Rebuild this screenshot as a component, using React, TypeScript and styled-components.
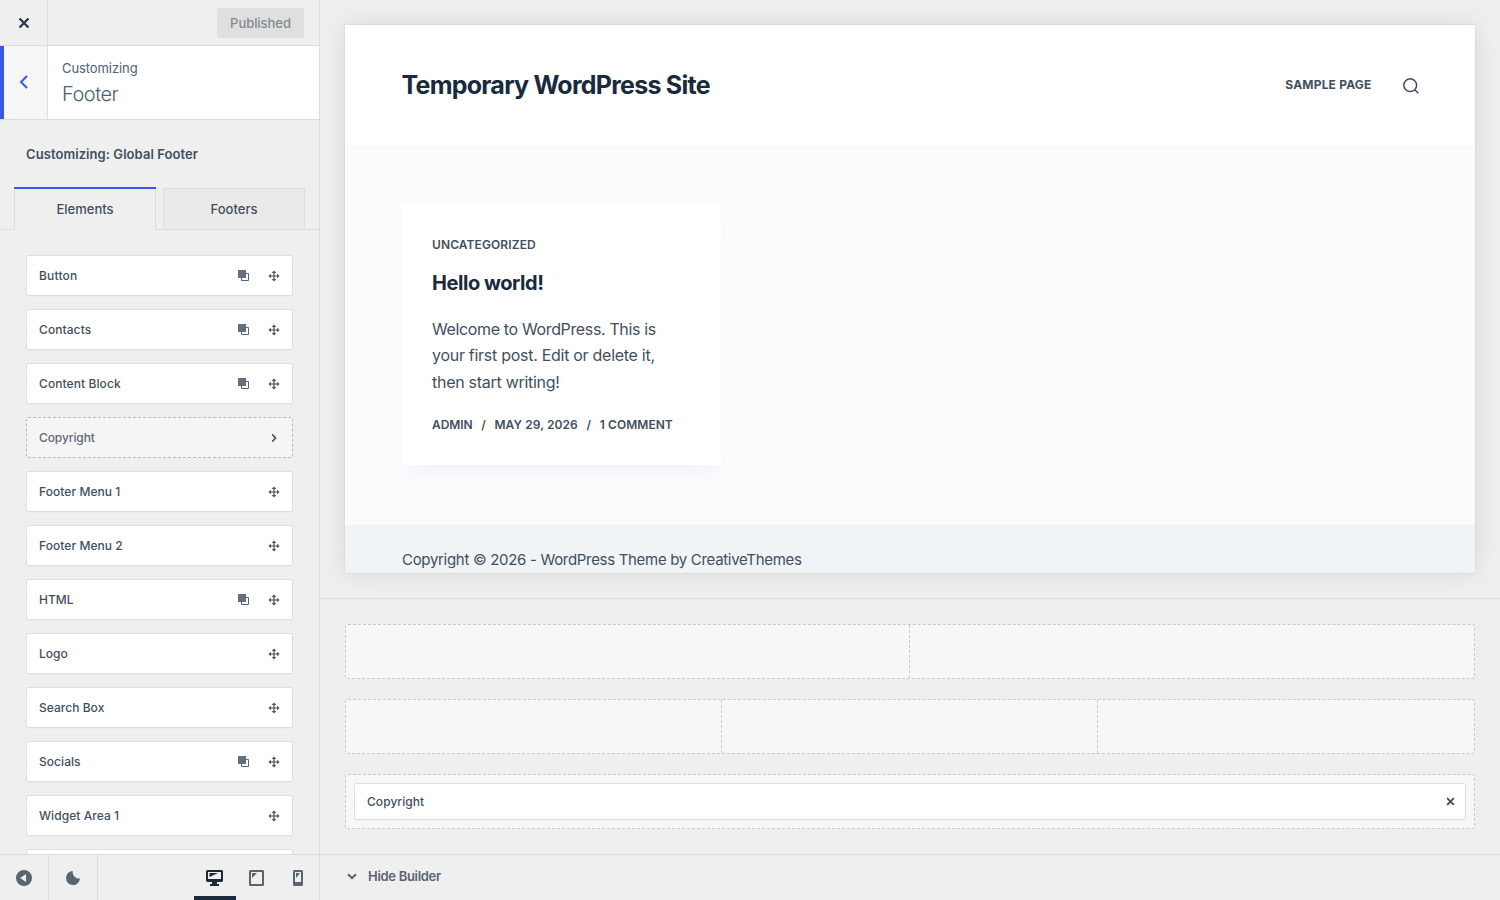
import React from 'react';
import styled, { createGlobalStyle, css } from 'styled-components';

const line = '#dcdcde';
const slate = '#3f4f60';

const GlobalStyle = createGlobalStyle`
  * { box-sizing: border-box; }
  body {
    margin: 0;
    background: #efefef;
    color: ${slate};
    font-family: Inter, "Liberation Sans", sans-serif;
    overflow: hidden;
  }
  button { font: inherit; color: inherit; background: none; border: 0; padding: 0; }
  h1, h2, h3, p { margin: 0; }
  svg { display: block; flex: none; }
`;

const Text = styled.span<{ $track?: number }>`
  letter-spacing: ${p => p.$track ?? 0}px;
  white-space: nowrap;
`;

const Page = styled.div`
  display: grid;
  grid-template-columns: 320px 1fr;
  width: 1500px;
  height: 900px;
`;

const Sidebar = styled.aside`
  display: flex;
  flex-direction: column;
  height: 900px;
  border-right: 1px solid ${line};
`;

const TopBar = styled.header`
  display: flex;
  flex: none;
  align-items: center;
  height: 46px;
  padding-right: 15px;
  border-bottom: 1px solid ${line};
`;

const CloseButton = styled.button`
  display: grid;
  place-items: center;
  width: 48px;
  height: 45px;
  border-right: 1px solid ${line};
  color: #2c3d4f;
`;

const PublishButton = styled.button`
  width: 87px;
  height: 30px;
  margin-left: auto;
  border-radius: 3px;
  background: #dfdfdf;
  color: #838b95;
  font-size: 13px;
  font-weight: 500;
`;

const SectionTitle = styled.div`
  display: flex;
  flex: none;
  height: 74px;
  background: #fff;
  border-bottom: 1px solid ${line};
`;

const BackButton = styled.button`
  display: grid;
  place-items: center;
  width: 48px;
  background: #f6f6f6;
  border-left: 4px solid #3858e9;
  border-right: 1px solid ${line};
  color: #3858e9;
  padding: 0 4px 1px 0;
`;

const TitleText = styled.div`
  padding: 12px 14px;
  font-size: 13px;
  line-height: 20px;
  color: #50606f;
`;

const SectionName = styled.h3`
  margin-top: 3px;
  font-size: 20px;
  line-height: 26px;
  font-weight: 300;
  color: #50606f;
`;

const Scope = styled.h2`
  flex: none;
  height: 67px;
  padding: 24px 26px 0;
  font-size: 13px;
  line-height: 20px;
  font-weight: 600;
`;

const Tabs = styled.div`
  display: flex;
  flex: none;
  height: 43px;
  gap: 7px;
  padding: 0 14px;
  box-shadow: inset 0 -1px ${line};
`;

const Tab = styled.button<{ $active?: boolean }>`
  width: 142px;
  font-size: 13px;
  font-weight: 500;
  ${p => p.$active ? css`
    height: 43px;
    padding-top: 1px;
    box-shadow: inset 0 2px #3858e9, inset 1px 0 ${line}, inset -1px 0 ${line};
    background: #efefef;
  ` : css`
    height: 42px;
    margin-top: 1px;
    border: 1px solid ${line};
    background: #eaeaea;
  `}
`;

const ElementList = styled.div`
  display: flex;
  flex: 1;
  min-height: 0;
  flex-direction: column;
  gap: 13px;
  padding: 25px 26px 0;
  overflow: hidden;
`;

const ElementRow = styled.div<{ $used?: boolean }>`
  display: flex;
  flex: none;
  align-items: center;
  width: 267px;
  height: 41px;
  padding: 0 12px;
  border: 1px ${p => p.$used ? 'dashed #b8b9bb' : 'solid #dddfe5'};
  border-radius: 2px;
  background: ${p => p.$used ? '#f5f5f5' : '#fff'};
  box-shadow: ${p => p.$used ? 'none' : '0 1px 1px rgba(0, 0, 0, 0.02)'};
  color: ${p => p.$used ? '#5e6975' : slate};
  font-size: 12px;
  font-weight: 500;
`;

const RowActions = styled.div`
  display: flex;
  align-items: center;
  gap: 18px;
  margin-left: auto;
  color: #45525f;
`;

const SidebarFooter = styled.footer`
  display: flex;
  flex: none;
  height: 46px;
  border-top: 1px solid ${line};
  color: #596570;
`;

const FooterButton = styled.button`
  display: grid;
  place-items: center;
  width: 49px;
  height: 45px;
  border-right: 1px solid ${line};
`;

const Devices = styled.div`
  display: flex;
  width: 125px;
  margin-left: auto;
`;

const DeviceButton = styled.button<{ $active?: boolean }>`
  display: grid;
  place-items: center;
  flex: none;
  width: 42px;
  height: 45px;
  padding-right: 1px;
  border-top: 4px solid transparent;
  border-bottom: 4px solid ${p => p.$active ? '#1b2a3d' : 'transparent'};
  color: ${p => p.$active ? '#192a3d' : 'inherit'};
  &:last-child { padding-right: 2px; }
`;

const Main = styled.main`
  display: flex;
  flex-direction: column;
  min-width: 0;
`;

const PreviewArea = styled.section`
  height: 599px;
  padding: 25px 25px 0;
  border-bottom: 1px solid ${line};
  overflow: hidden;
`;

const Preview = styled.div`
  height: 548px;
  background: #fafbfd;
  box-shadow: 0 0 0 1px rgba(0, 0, 0, 0.035), 0 0 25px rgba(0, 0, 0, 0.1);
  overflow: hidden;
`;

const SiteHeader = styled.div`
  display: flex;
  align-items: center;
  height: 120px;
  padding: 0 56px 0 56.5px;
  background: #fff;
  color: ${slate};
`;

const SiteTitle = styled.h1`
  font-size: 25px;
  line-height: 30px;
  font-weight: 700;
  color: #192a3d;
`;

const MenuLink = styled.a`
  margin: 0 31.5px 1px auto;
  font-size: 12px;
  font-weight: 700;
`;

const SearchIcon = styled.svg`
  margin-top: 1px;
`;

const SiteBody = styled.div`
  height: 380px;
  padding: 60px 57px;
`;

const Card = styled.article`
  width: 319px;
  height: 260px;
  padding: 31px 30px 29px;
  background: #fff;
  box-shadow: 0 12px 18px -6px rgba(34, 56, 101, 0.04);
`;

const Meta = styled.div`
  display: flex;
  font-size: 12px;
  line-height: 18px;
  font-weight: 600;
`;

const Slash = styled.span`
  width: 22px;
  text-align: center;
`;

const PostTitle = styled.h2`
  margin: 15px 0 19px;
  font-size: 20px;
  line-height: 28px;
  font-weight: 700;
  color: #192a3d;
`;

const Excerpt = styled.p`
  display: flex;
  flex-direction: column;
  margin-bottom: 21px;
  font-size: 16px;
  line-height: 26.4px;
`;

const SiteFooter = styled.div`
  height: 48px;
  padding: 22px 57px 0;
  background: #f0f4f7;
  font-size: 15px;
  line-height: 25px;
`;

const Builder = styled.section`
  display: flex;
  flex-direction: column;
  gap: 20px;
  height: 255px;
  padding: 25px 25px 0;
`;

const BuilderRow = styled.div`
  display: grid;
  grid-auto-flow: column;
  grid-auto-columns: minmax(0, 1fr);
  height: 55px;
  border: 1px dashed #c8c9ca;
  border-radius: 3px;
  background: #f7f7f7;
`;

const Cell = styled.div`
  padding: 8px;
  &:not(:last-child) { border-right: 1px dashed #c8c9ca; }
`;

const Placed = styled.div`
  display: flex;
  align-items: center;
  justify-content: space-between;
  height: 37px;
  padding: 0 10px 0 12px;
  border: 1px solid #dddfe5;
  border-radius: 2px;
  background: #fff;
  box-shadow: 0 1px 1px rgba(0, 0, 0, 0.03);
  font-size: 12px;
  font-weight: 500;
`;

const BuilderFooter = styled.footer`
  display: flex;
  align-items: center;
  gap: 10px;
  height: 46px;
  padding: 0 0 3px 26px;
  border-top: 1px solid ${line};
  font-size: 13px;
  font-weight: 600;
  color: #5a6570;
`;

const Cross = ({ size, width }: { size: number; width: number }) => (
  <svg width={size} height={size} viewBox="0 0 12 12" fill="none" stroke="currentColor" strokeWidth={width}>
    <path d="M1.5 1.5l9 9M10.5 1.5l-9 9" />
  </svg>
);

const CloneIcon = () => (
  <svg width="12" height="12" viewBox="0 0 12 12">
    <path d="M3.5 3.5h7v7h-7z" fill="none" stroke="#56626f" />
    <path d="M0 0h8v8H0z" fill="#646f7b" />
  </svg>
);

const MoveIcon = () => (
  <svg width="12" height="12" viewBox="0 0 12 12" fill="currentColor">
    <path d="M6 .4 8.3 2.9H6.6v2.5h2.5V3.7L11.6 6 9.1 8.3V6.6H6.6v2.5h1.7L6 11.6 3.7 9.1h1.7V6.6H2.9v1.7L.4 6l2.5-2.3v1.7h2.5V2.9H3.7z" />
  </svg>
);

const Chevron = ({ down, ...rest }: { down?: boolean } & React.SVGProps<SVGSVGElement>) => (
  <svg width="12" height="12" viewBox="0 0 12 12" fill="none" stroke="currentColor" strokeWidth="1.6" {...rest}>
    <path d={down ? 'M2 4.2 6 8l4-3.8' : 'M4.2 2.4 7.6 6 4.2 9.6'} />
  </svg>
);

type Item = { name: string; clone?: boolean; used?: boolean; track?: number };

const items: Item[] = [
  { name: 'Button', clone: true, track: 0.18 },
  { name: 'Contacts', clone: true, track: 0.08 },
  { name: 'Content Block', clone: true, track: 0.09 },
  { name: 'Copyright', used: true, track: -0.1 },
  { name: 'Footer Menu 1', track: 0.06 },
  { name: 'Footer Menu 2', track: 0.06 },
  { name: 'HTML', clone: true },
  { name: 'Logo' },
  { name: 'Search Box', track: 0.03 },
  { name: 'Socials', clone: true, track: 0.05 },
  { name: 'Widget Area 1', track: 0.06 },
];

export default function App() {
  return (
    <Page>
      <GlobalStyle />
      <Sidebar>
        <TopBar>
          <CloseButton aria-label="Close"><Cross size={12} width={2.4} /></CloseButton>
          <PublishButton><Text $track={-0.05}>Published</Text></PublishButton>
        </TopBar>
        <SectionTitle>
          <BackButton aria-label="Back">
            <svg width="10" height="14" viewBox="0 0 10 14" fill="none" stroke="currentColor" strokeWidth="2">
              <path d="M8 1 2 7l6 6" />
            </svg>
          </BackButton>
          <TitleText>
            <Text $track={-0.08}>Customizing</Text>
            <SectionName><Text $track={-0.5}>Footer</Text></SectionName>
          </TitleText>
        </SectionTitle>
        <Scope><Text $track={0.07}>Customizing: Global Footer</Text></Scope>
        <Tabs>
          <Tab $active><Text>Elements</Text></Tab>
          <Tab><Text>Footers</Text></Tab>
        </Tabs>
        <ElementList>
          {items.map(item => (
            <ElementRow key={item.name} $used={item.used}>
              <Text $track={item.track}>{item.name}</Text>
              <RowActions>
                {item.clone && <CloneIcon />}
                {item.used ? <Chevron /> : <MoveIcon />}
              </RowActions>
            </ElementRow>
          ))}
          <ElementRow />
        </ElementList>
        <SidebarFooter>
          <FooterButton aria-label="Collapse">
            <svg width="16" height="16" viewBox="0 0 16 16" fill="currentColor">
              <path fillRule="evenodd" d="M8 0a8 8 0 1 1 0 16A8 8 0 0 1 8 0zm2 4L4.2 8 10 12z" />
            </svg>
          </FooterButton>
          <FooterButton aria-label="Dark mode">
            <svg width="14" height="14" viewBox="0 0 14 14" fill="currentColor">
              <path d="M6.8 0A7 7 0 1 0 14 7.4 6.3 6.3 0 0 1 6.8 0z" />
            </svg>
          </FooterButton>
          <Devices>
            <DeviceButton $active aria-label="Desktop">
              <svg width="17" height="16" viewBox="0 0 17 16" fill="currentColor">
                <path fillRule="evenodd" d="M1 0h15l1 1v10l-1 1h-5v2h2v2H4v-2h2v-2H1l-1-1V1zM2 2v7h13V2z" />
                <path d="M3.5 3H12L3.5 7z" />
              </svg>
            </DeviceButton>
            <DeviceButton aria-label="Tablet">
              <svg width="15" height="16" viewBox="0 0 15 16" fill="currentColor">
                <path fillRule="evenodd" d="M1 0h13l1 1v14l-1 1H1l-1-1V1zM2 2v12h11V2z" />
                <path d="M3 3h5L3 8z" />
              </svg>
            </DeviceButton>
            <DeviceButton aria-label="Phone">
              <svg width="10" height="16" viewBox="0 0 10 16" fill="currentColor">
                <path fillRule="evenodd" d="M1 0h8l1 1v14l-1 1H1l-1-1V1zM2 2v10h6V2z" />
                <path d="M3 3h4L3 8z" />
              </svg>
            </DeviceButton>
          </Devices>
        </SidebarFooter>
      </Sidebar>
      <Main>
        <PreviewArea>
          <Preview>
            <SiteHeader>
              <SiteTitle><Text $track={-0.75}>Temporary WordPress Site</Text></SiteTitle>
              <MenuLink><Text $track={0.2}>SAMPLE PAGE</Text></MenuLink>
              <SearchIcon width="16" height="16" viewBox="0 0 16 16" fill="none" stroke="currentColor" strokeWidth="1.5">
                <circle cx="7.2" cy="7.2" r="6.4" />
                <path d="m11.8 11.8 3.5 3.5" />
              </SearchIcon>
            </SiteHeader>
            <SiteBody>
              <Card>
                <Meta><Text $track={0.1}>UNCATEGORIZED</Text></Meta>
                <PostTitle><Text $track={-0.45}>Hello world!</Text></PostTitle>
                <Excerpt>
                  <Text $track={-0.36}>Welcome to WordPress. This is</Text>
                  <Text $track={-0.28}>your first post. Edit or delete it,</Text>
                  <Text $track={-0.28}>then start writing!</Text>
                </Excerpt>
                <Meta>
                  <Text $track={-0.1}>ADMIN</Text><Slash>/</Slash>
                  <Text $track={0.08}>MAY 29, 2026</Text><Slash>/</Slash>
                  <Text $track={0.05}>1 COMMENT</Text>
                </Meta>
              </Card>
            </SiteBody>
            <SiteFooter><Text $track={-0.31}>Copyright © 2026 - WordPress Theme by CreativeThemes</Text></SiteFooter>
          </Preview>
        </PreviewArea>
        <Builder>
          <BuilderRow><Cell /><Cell /></BuilderRow>
          <BuilderRow><Cell /><Cell /><Cell /></BuilderRow>
          <BuilderRow>
            <Cell>
              <Placed><Text $track={0.05}>Copyright</Text><Cross size={9} width={2.4} /></Placed>
            </Cell>
          </BuilderRow>
        </Builder>
        <BuilderFooter><Chevron down strokeWidth="2" /><Text $track={-0.3}>Hide Builder</Text></BuilderFooter>
      </Main>
    </Page>
  );
}
